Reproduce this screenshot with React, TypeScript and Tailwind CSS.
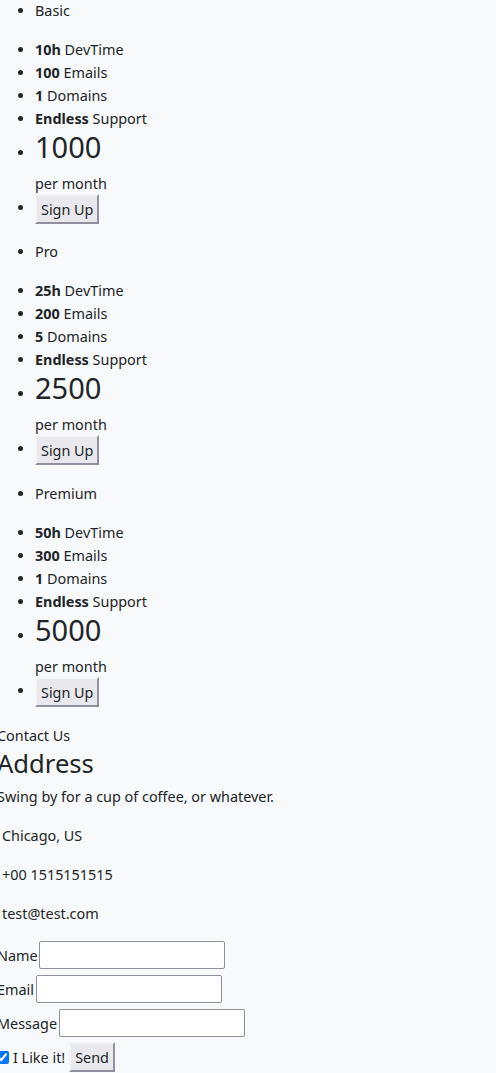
import React from "react";

type Plan = {
  name: string;
  dev: string;
  emails: string;
  domains: string;
  price: string;
  headCls: string;
  blockCls: string;
};

const plans: Plan[] = [
  {
    name: "Basic",
    dev: "10h",
    emails: "100",
    domains: "1",
    price: "1000",
    headCls: "list-disc pl-[38px] -mt-[1px] mb-[16px]",
    blockCls: "mb-[16px]",
  },
  {
    name: "Pro",
    dev: "25h",
    emails: "200",
    domains: "5",
    price: "2500",
    headCls: "list-disc pl-[38px] mb-[16px]",
    blockCls: "mb-[17px]",
  },
  {
    name: "Premium",
    dev: "50h",
    emails: "300",
    domains: "1",
    price: "5000",
    headCls: "list-disc pl-[38px] mb-[16px]",
    blockCls: "mb-[16px]",
  },
];

const btn =
  "bg-[#e9e9ed] text-[#212529] border-2 border-solid border-t-[#f4f4f6] border-l-[#f4f4f6] border-b-[#8f8f9d] border-r-[#8f8f9d] px-[4px] leading-[23px] h-[30px] align-middle";

const input =
  "bg-white border border-solid border-[#8f8f9d] rounded-[2px] h-[28px] w-[186px]";

function PlanBlock({ p }: { p: Plan }) {
  return (
    <div className={p.blockCls}>
      <ul className={p.headCls}>
        <li>{p.name}</li>
      </ul>
      <ul className="list-disc pl-[38px]">
        <li>
          <b className="font-bold">{p.dev}</b> DevTime
        </li>
        <li>
          <b className="font-bold">{p.emails}</b> Emails
        </li>
        <li>
          <b className="font-bold">{p.domains}</b> Domains
        </li>
        <li>
          <b className="font-bold">Endless</b> Support
        </li>
        <li>
          <span className="text-[29px] leading-[34px]">{p.price}</span>
          <p className="mt-[8px] leading-[23px]">per month</p>
        </li>
        <li className="h-[30px] -mt-[1px] mb-[1px]">
          <button className={btn}>Sign Up</button>
        </li>
      </ul>
    </div>
  );
}

export default function App() {
  return (
    <div
      className="min-h-[1073px] bg-[#f8f9fa] text-[#212529] text-[14.4px] leading-[23px] overflow-hidden"
      style={{ fontFamily: '"Noto Sans", sans-serif' }}
    >
      <div className="-ml-[3px]">
        {plans.map((p) => (
          <PlanBlock key={p.name} p={p} />
        ))}
        <section className="pt-[1px]">
          <div>Contact Us</div>
          <h2 className="text-[25.6px] leading-[34px] mb-[4px]">Address</h2>
          <p className="mb-[16px]">Swing by for a cup of coffee, or whatever.</p>
          <p className="mb-[16px] pl-[5px]">Chicago, US</p>
          <p className="mb-[16px] pl-[5px]">+00 1515151515</p>
          <p className="mb-[16px] pl-[5px]">test@test.com</p>
          <form className="flex flex-col gap-[6px]">
            <div className="flex items-center gap-[1px]">
              <label>Name</label>
              <input className={input} />
            </div>
            <div className="flex items-center gap-[2px]">
              <label>Email</label>
              <input className={input} />
            </div>
            <div className="flex items-center gap-[2px]">
              <label>Message</label>
              <input className={input} />
            </div>
            <div className="flex items-center -mt-[1px]">
              <input
                type="checkbox"
                defaultChecked
                className="w-[13px] h-[13px] -ml-[1px] mr-[4px] accent-[#0075ff]"
              />
              <label className="mr-[4px]">I Like it!</label>
              <button type="button" className={btn}>
                Send
              </button>
            </div>
          </form>
        </section>
      </div>
    </div>
  );
}
